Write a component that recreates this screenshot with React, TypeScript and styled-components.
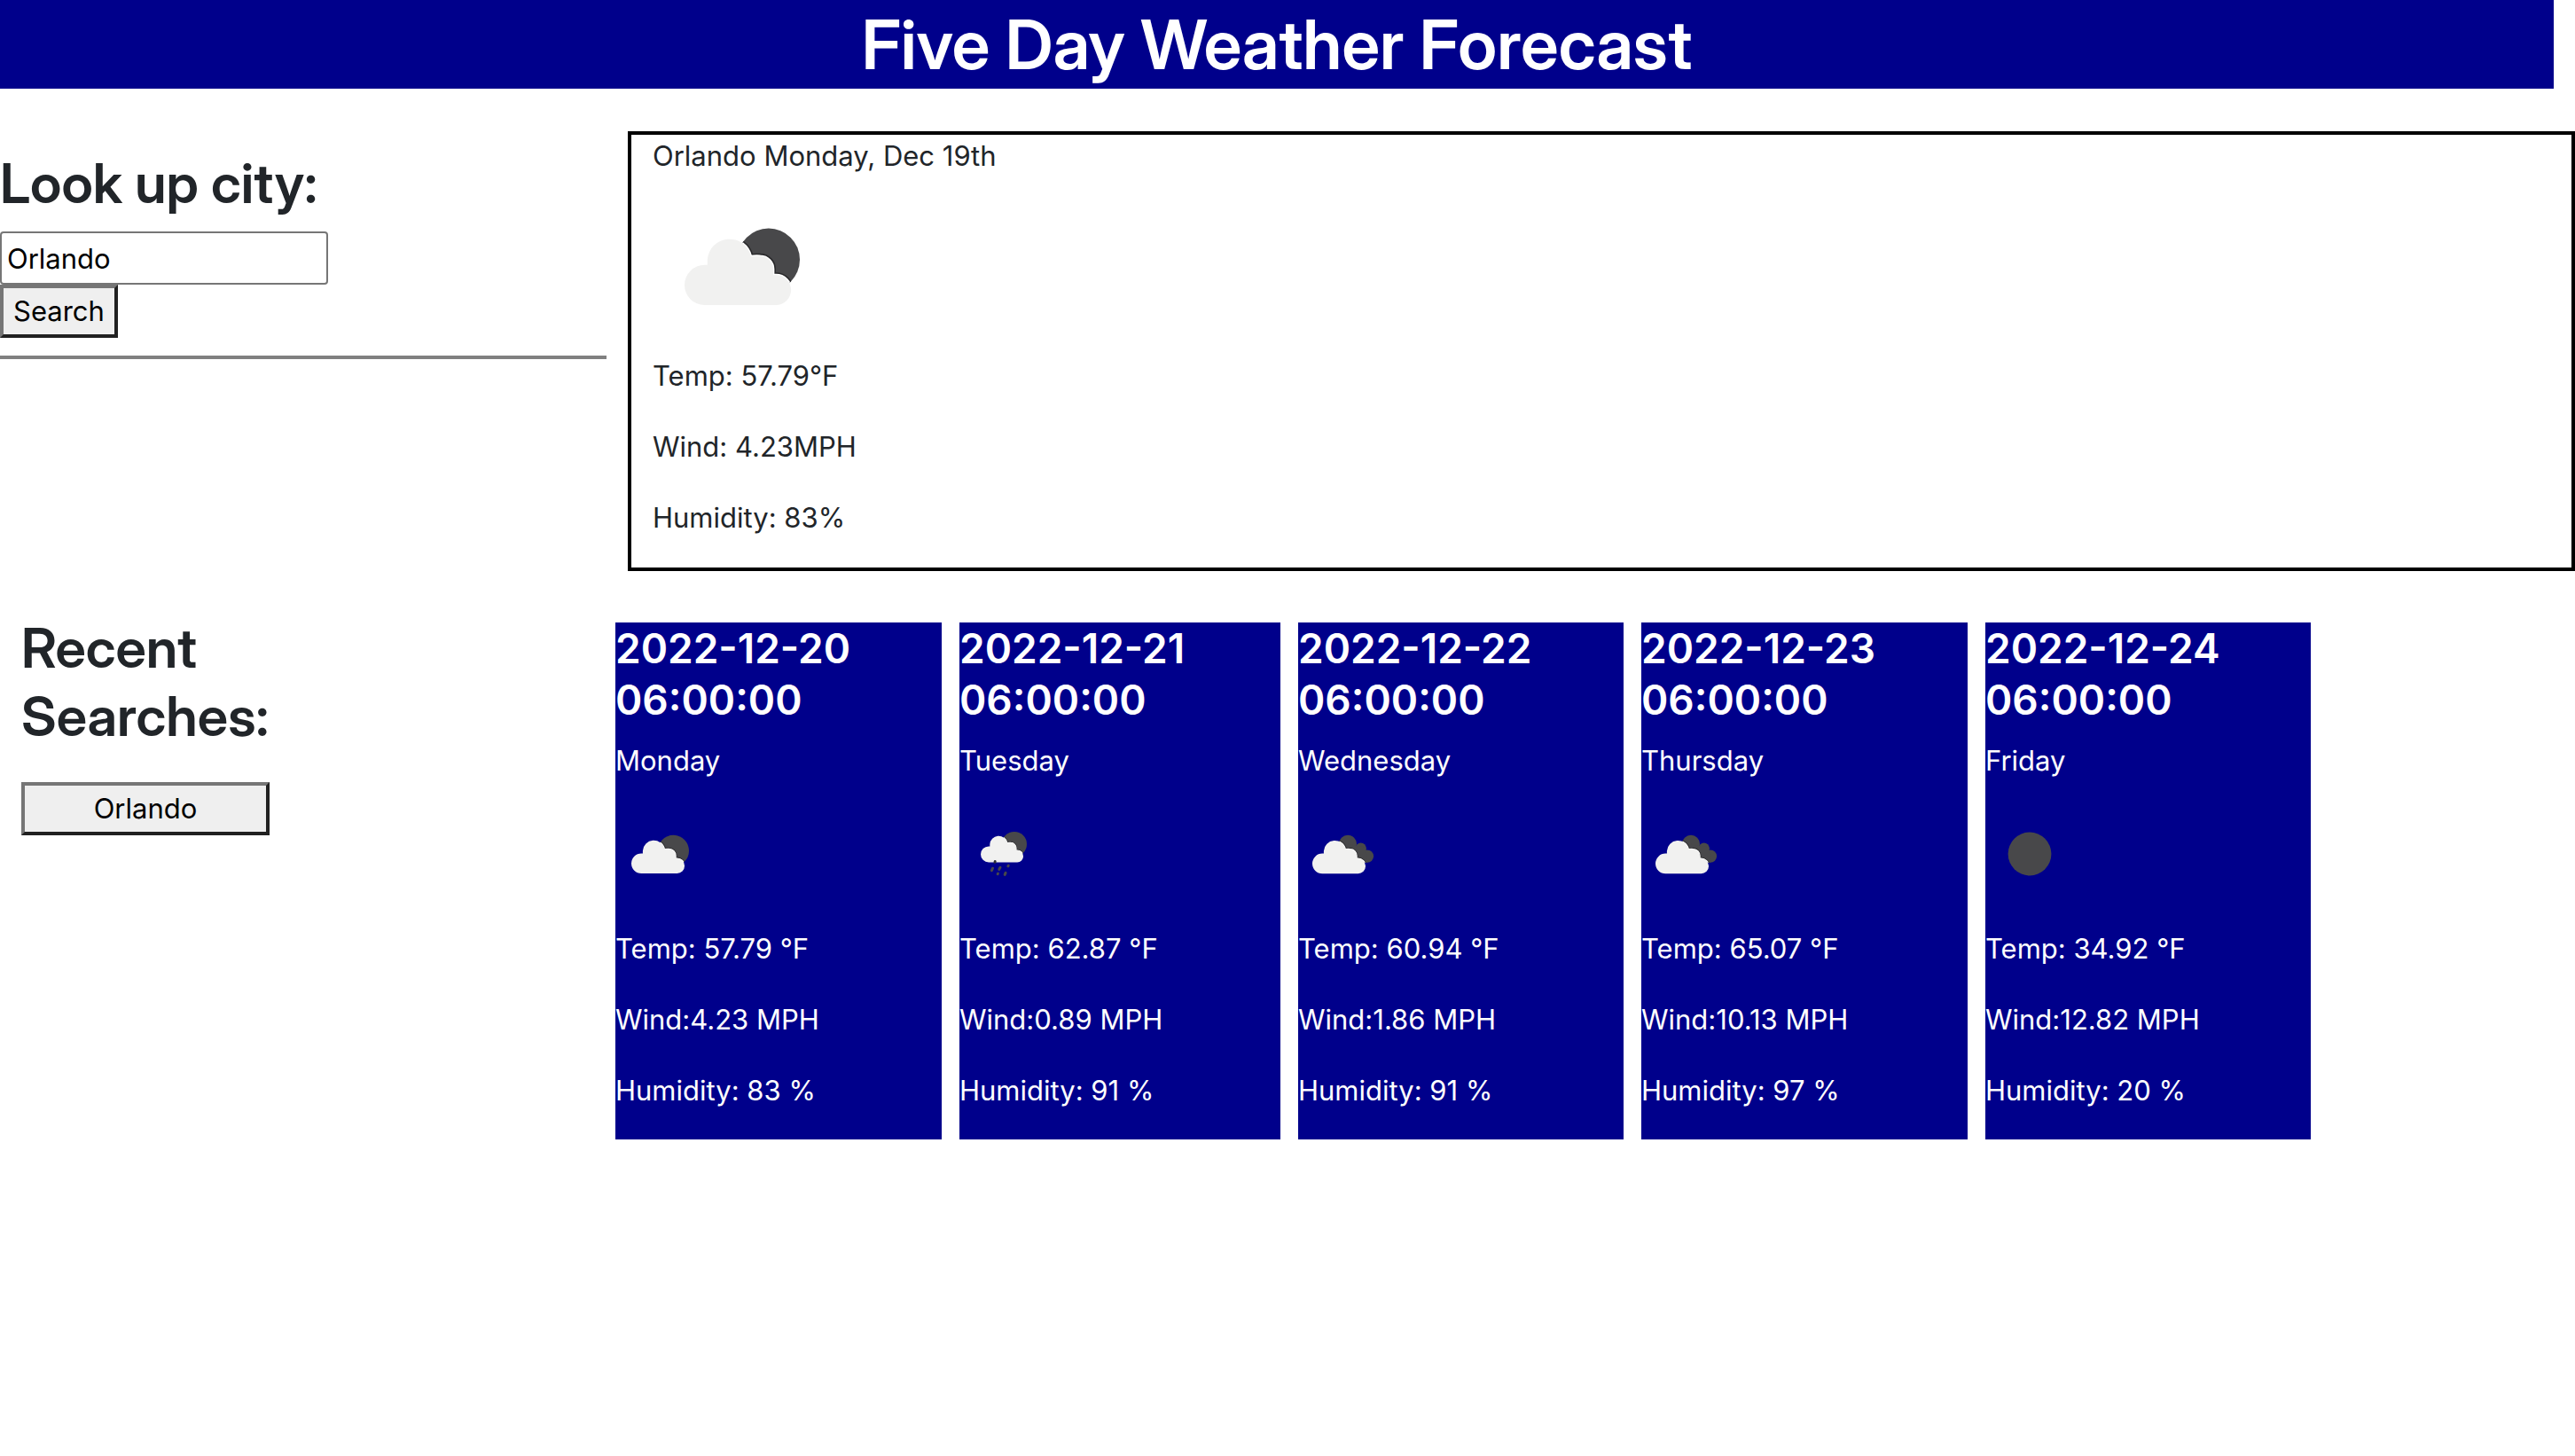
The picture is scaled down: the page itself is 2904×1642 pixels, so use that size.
import React, { useId, useState } from "react";
import styled, { createGlobalStyle } from "styled-components";

const NAVY = "#00008b";
const DARK = "#48484a";
const DISPLAY = `"Inter Display", Inter, "Liberation Sans", sans-serif`;
const TEXT = `Inter, "Liberation Sans", sans-serif`;

const GlobalStyle = createGlobalStyle`
  *, *::before, *::after { box-sizing: border-box; }
  body {
    margin: 0;
    background: #fff;
    color: #212529;
    font: 400 31px/48px ${TEXT};
  }
  h1, h2, h3, p { margin: 0; }
`;

const Banner = styled.header`
  margin-right: 24px;
  padding: 2px 0;
  background: ${NAVY};
  color: #fff;
  text-align: center;
`;

const Title = styled.h1`
  font: 600 77px/96px ${DISPLAY};
`;

const TopRow = styled.main`
  display: grid;
  grid-template-columns: minmax(0, 684fr) minmax(0, 2196fr);
  column-gap: 24px;
  margin-top: 48px;
`;

const SearchPanel = styled.form`
  display: flex;
  flex-direction: column;
  align-items: flex-start;
  padding-top: 20px;
`;

const Heading = styled.h2`
  font: 600 62px/77px ${DISPLAY};
`;

const CityInput = styled.input`
  width: 370px;
  max-width: 100%;
  height: 60px;
  margin-top: 16px;
  padding: 4px 6px;
  border: 2px solid #767676;
  border-radius: 4px;
  background: #fff;
  color: #000;
  font: inherit;
`;

const CityButton = styled.button<{ $block?: boolean }>`
  width: ${(p) => (p.$block ? "100%" : "auto")};
  height: 60px;
  padding: 2px 11px;
  border: 4px solid;
  border-color: #767676 #212121 #212121 #767676;
  background: #efefef;
  color: #000;
  font: inherit;
  line-height: 48px;
`;

const Rule = styled.hr`
  width: 100%;
  height: 4px;
  margin: 20px 0 0;
  border: 0;
  background: #808080;
`;

const CurrentCard = styled.section`
  padding: 0 24px 32px;
  border: 4px solid #000;
`;

const Readings = styled.div`
  display: flex;
  flex-direction: column;
  gap: 32px;
`;

const BottomRow = styled.section`
  display: grid;
  grid-template-columns: minmax(0, 694fr) minmax(0, 1912fr) minmax(0, 298fr);
  margin-top: 48px;
`;

const Recent = styled.aside`
  display: flex;
  flex-direction: column;
  gap: 36px;
  width: 304px;
  padding-left: 24px;
`;

const Forecast = styled.div`
  display: grid;
  grid-template-columns: 368fr 362fr 367fr 368fr 367fr;
  gap: 20px;
  margin-top: 10px;
`;

const DayCard = styled.article`
  padding-bottom: 31px;
  background: ${NAVY};
  color: #fff;
`;

const DayDate = styled.h3`
  padding-right: 80px;
  margin-bottom: 16px;
  font: 600 46px/58px ${TEXT};
`;

const Icon = styled.svg<{ $size: number }>`
  display: block;
  width: ${(p) => p.$size}px;
  height: ${(p) => p.$size}px;
`;

const IconRow = styled.div`
  padding: 31px 0 33px;
`;

type Sky = "few" | "rain" | "broken" | "clear";

const CLOUD =
  "M29.3 72A11.3 11.3 0 0 1 29.3 49.4H30.9V46.5A12.4 12.4 0 0 1 55.4 44.6Q57.4 44.2 60.8 44.4A7.4 7.4 0 0 1 68 52V55.1H69.6A8.45 8.45 0 0 1 69.6 72Z";

function Cloud({ children }: { children: React.ReactNode }) {
  const id = useId().replace(/[^a-zA-Z0-9]/g, "");
  return (
    <>
      <defs>
        <clipPath id={id}>{children}</clipPath>
      </defs>
      <g fill={DARK}>{children}</g>
      <g clipPath={`url(#${id})`} fill="none" strokeLinejoin="round">
        <path d={CLOUD} stroke="#29292b" strokeWidth="3" />
        <path d={CLOUD} stroke="#fff" strokeWidth="1.4" />
      </g>
      <path d={CLOUD} fill="#f1f1f0" />
    </>
  );
}

function WeatherIcon({ sky, size }: { sky: Sky; size: number }) {
  return (
    <Icon $size={size} viewBox="0 0 100 100" aria-hidden="true">
      {sky === "few" && (
        <Cloud>
          <circle cx="65.4" cy="46.4" r="17.6" />
        </Cloud>
      )}
      {sky === "rain" && (
        <>
          <g transform="translate(9.6 1.9) scale(0.8)">
            <Cloud>
              <circle cx="65.4" cy="46.4" r="17.6" />
            </Cloud>
          </g>
          <g stroke={DARK} strokeWidth="3" strokeLinecap="round">
            <path d="M37.5 66.2L36.4 68.6M46 65.2L44.8 67.4M55.2 63.2L54.9 63.8M43.4 72.2L43.2 72.6M52.1 71.3L51.2 73.4" />
            <path d="M40.2 58.5L40 59.3" stroke="#303033" />
          </g>
        </>
      )}
      {sky === "broken" && (
        <g transform="translate(-2 0.2)">
          <Cloud>
            <circle cx="58" cy="38.6" r="10" />
            <circle cx="72.7" cy="43.2" r="6" />
            <circle cx="79.9" cy="52.4" r="7.2" />
            <path d="M58 38.6L67 40.5L78.6 42.4V46L80 59.6L60 58Z" />
          </Cloud>
        </g>
      )}
      {sky === "clear" && <circle cx="50" cy="50" r="24.4" fill={DARK} />}
    </Icon>
  );
}

const days: { date: string; name: string; sky: Sky; temp: string; wind: string; humidity: string }[] = [
  { date: "2022-12-20", name: "Monday", sky: "few", temp: "57.79", wind: "4.23", humidity: "83" },
  { date: "2022-12-21", name: "Tuesday", sky: "rain", temp: "62.87", wind: "0.89", humidity: "91" },
  { date: "2022-12-22", name: "Wednesday", sky: "broken", temp: "60.94", wind: "1.86", humidity: "91" },
  { date: "2022-12-23", name: "Thursday", sky: "broken", temp: "65.07", wind: "10.13", humidity: "97" },
  { date: "2022-12-24", name: "Friday", sky: "clear", temp: "34.92", wind: "12.82", humidity: "20" },
];

export default function App() {
  const [city, setCity] = useState("Orlando");
  return (
    <>
      <GlobalStyle />
      <Banner>
        <Title>Five Day Weather Forecast</Title>
      </Banner>
      <TopRow>
        <SearchPanel onSubmit={(e) => e.preventDefault()}>
          <Heading as="label" htmlFor="city">
            Look up city:
          </Heading>
          <CityInput id="city" type="text" value={city} onChange={(e) => setCity(e.target.value)} />
          <CityButton type="submit">Search</CityButton>
          <Rule />
        </SearchPanel>
        <CurrentCard>
          <p>Orlando Monday, Dec 19th</p>
          <WeatherIcon sky="few" size={200} />
          <Readings>
            <p>Temp: 57.79°F</p>
            <p>Wind: 4.23MPH</p>
            <p>Humidity: 83%</p>
          </Readings>
        </CurrentCard>
      </TopRow>
      <BottomRow>
        <Recent>
          <Heading>Recent Searches:</Heading>
          <CityButton type="button" $block onClick={() => setCity("Orlando")}>
            Orlando
          </CityButton>
        </Recent>
        <Forecast>
          {days.map((d) => (
            <DayCard key={d.date}>
              <DayDate>{d.date} 06:00:00</DayDate>
              <p>{d.name}</p>
              <IconRow>
                <WeatherIcon sky={d.sky} size={100} />
              </IconRow>
              <Readings>
                <p>Temp: {d.temp} °F</p>
                <p>Wind:{d.wind} MPH</p>
                <p>Humidity: {d.humidity} %</p>
              </Readings>
            </DayCard>
          ))}
        </Forecast>
      </BottomRow>
    </>
  );
}
